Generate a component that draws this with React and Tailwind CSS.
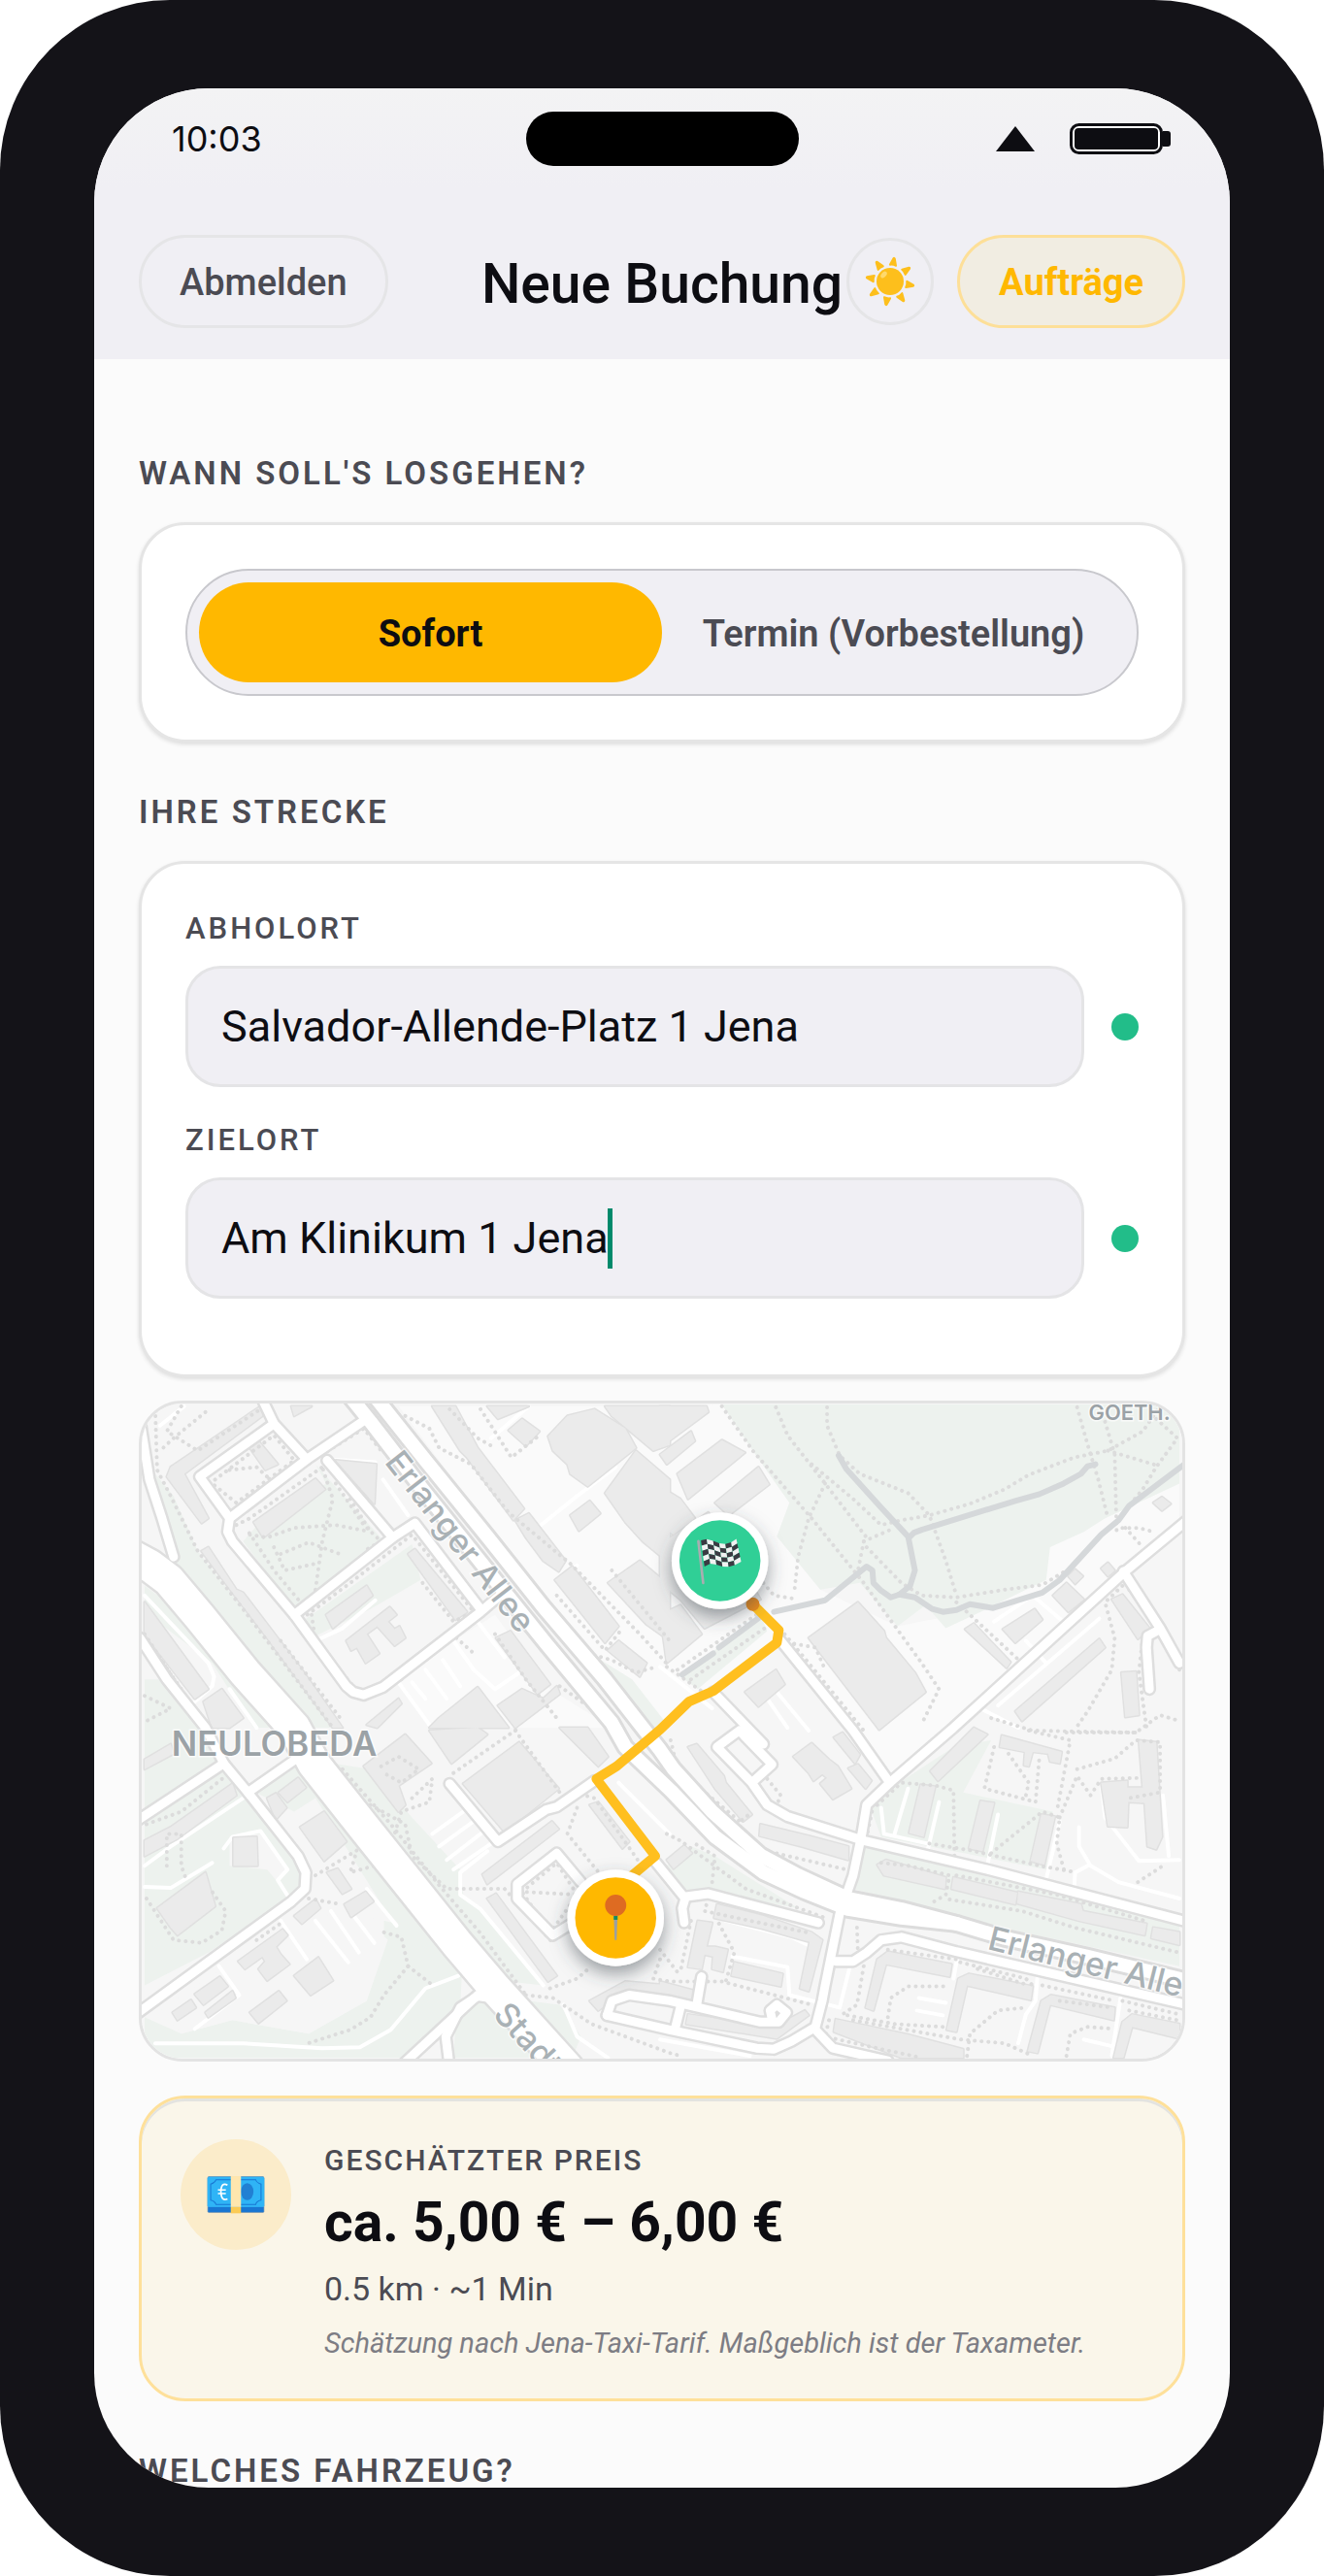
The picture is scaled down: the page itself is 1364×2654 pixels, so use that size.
import React, { useState } from "react";

// Map sheets: the drawing is split in four sheets, each with its own origin.
const ORIGINS = { a: [-13, -13], b: [537, -13], c: [-13, 337], d: [537, 337] };

// "a 10,20 30,40 b 5,5" -> list of map points, a letter switches the sheet
function toPoints(line) {
  let origin = ORIGINS.a;
  const points = [];
  line.split(" ").forEach((part) => {
    if (ORIGINS[part]) {
      origin = ORIGINS[part];
      return;
    }
    const [x, y] = part.split(",").map(Number);
    points.push(`${Math.round(x / 2.8 + origin[0])},${Math.round(y / 3 + origin[1])}`);
  });
  return points.join(" ");
}

const openGround = [
  "a 780,50 1568,50 b 180,45 270,190 375,350 340,455 465,620 690,735 900,690 1130,490 1290,400 1506,290 1506,430 1350,560 850,1050 560,1050 340,780 0,1050 a 1500,1050 1160,590",
  "a 780,910 940,780 1060,700 1220,930 1400,1050 880,1050",
  "d 680,170 850,0 560,0",
];

const greens = [
  "b 180,45 1506,45 1506,290 1290,400 1230,440 1130,490 1120,590 930,690 830,740 770,670 690,735 580,600 465,620 340,455 375,350 270,190",
  "a 75,260 130,330 200,500 330,680 400,780 620,1050 500,1050 160,600 100,460",
  "a 540,230 740,470 480,680 330,470 390,400 570,290",
  "a 500,720 820,480 845,590 700,680 530,770",
  "a 45,610 160,700 430,1050 360,1050 240,850 45,690",
  "a 1310,800 1460,900 1568,1050 1500,1050",
  "a 45,900 110,900 200,1050 45,1050",
  "c 45,0 200,0 270,110 330,200 480,400 500,480 450,540 230,700 45,800",
  "c 345,190 480,110 800,530 965,750 960,860 800,1025 45,1025 45,900 150,950 300,910 520,950 690,850 750,660 600,500 480,260",
  "c 590,110 700,130 820,280 960,440 970,520 1020,570 1200,800 1100,790 950,590 760,340",
  "c 1160,850 1250,860 1310,960 1290,1010 1200,930",
  "c 950,880 1020,850 1060,880 1180,1025 940,1025",
  "d 20,430 90,370 160,400 400,560 140,510 80,520",
  "d 590,370 1506,610 1506,740 860,590 560,500",
  "d 680,180 850,60 960,40 880,200 1140,260 1120,440 640,340 610,250",
  "b 60,890 290,700 310,750 110,930",
];

const lightBlocks = [
  "a 230,270 370,170 430,130 490,210 310,350",
  "a 540,780 850,590 930,710 770,850 680,900 640,930",
  "c 290,340 380,330 460,440 430,480 400,440 290,430",
  "c 440,600 740,560 740,680 690,850 520,950 300,910 150,950 90,880 360,680",
  "c 480,260 540,220 740,560 780,610 560,560 520,480",
];

const buildings = [
  "a 120,240 380,50 385,80 160,260 230,400 210,415 108,270",
  "a 350,180 375,160 430,230 395,250",
  "a 362,410 540,275 568,310 390,460",
  "a 600,220 718,230 710,355",
  "a 810,510 830,495 980,690 945,715",
  "a 210,500 230,490 310,620 330,630 500,870 620,1050 590,1050 400,770 300,630",
  "a 570,700 690,610 705,640 590,740",
  "a 630,780 755,675 775,700 750,720 770,745 785,735 800,770 770,795 720,735 690,760 725,820 685,850 660,800 645,810",
  "a 880,50 945,50 1010,180 1145,370 1115,405 980,210 960,190",
  "a 1120,405 1160,385 1265,530 1245,565 1200,530 1150,460",
  "a 1235,590 1285,550 1420,735 1380,785",
  "a 1280,390 1335,345 1365,385 1305,438",
  "a 1065,770 1105,750 1220,915 1185,945",
  "a 870,1050 900,1020 1010,925 1100,1050",
  "a 1070,980 1140,930 1200,960 1240,920 1250,945 1120,1050",
  "a 1390,810 1420,780 1500,850 1480,890",
  "a 1215,145 1270,80 1350,60 1440,120 1470,180 1400,240 1330,300 1280,260 1270,230 1230,190",
  "a 1100,125 1140,90 1190,130 1150,175",
  "a 1380,320 1470,190 1568,280 1568,540 1490,470 1440,410",
  "a 1390,600 1480,530 1568,610 1568,780 1500,730",
  "a 1040,50 1160,50 1070,90",
  "a 1380,50 1568,50 1568,170 1520,190 1400,80",
  "a 45,660 230,930 190,960 45,760",
  "a 215,970 270,930 330,1020 290,1050 240,1050",
  "a 470,50 530,50 480,80",
  "a 690,1040 780,960 790,975 720,1050",
  "b 0,50 135,50 140,70 0,180",
  "b 0,200 90,130 100,160 20,230",
  "b 50,260 180,155 245,195 80,340",
  "b 160,350 285,240 315,295 200,390",
  "b 0,300 60,340 100,400 40,450 0,420",
  "b 0,480 140,380 240,560 290,650 130,740 60,650 0,600",
  "b 0,700 60,670 120,760 20,850",
  "b 430,770 575,660 650,750 655,770 740,880 770,940 635,1055",
  "b 245,940 335,870 360,915 285,985",
  "b 885,745 910,725 1015,845 1005,865",
  "b 995,745 1085,680 1110,715 1030,785",
  "b 1140,640 1180,600 1230,650 1185,690",
  "b 1310,650 1340,635 1420,740 1385,775",
  "b 1030,1000 1275,775 1290,800 1050,1030",
  "b 1338,880 1380,875 1390,1010 1350,1018",
  "b 1432,350 1455,333 1480,355 1455,375",
  "b 1185,580 1203,558 1225,580 1205,602",
  "b 1280,555 1300,538 1318,560 1300,580",
  "c 45,100 120,50 130,80 45,130",
  "c 120,310 300,175 310,210 140,345 45,400 45,350",
  "c 302,342 370,340 372,430 302,430",
  "c 80,560 220,450 250,555 140,645 120,620",
  "c 495,310 565,262 630,355 565,415",
  "c 400,220 425,205 455,250 425,285",
  "c 435,200 490,155 512,185 460,230",
  "c 575,450 605,438 645,500 620,515",
  "c 480,585 540,535 555,560 500,610",
  "c 625,550 685,510 708,540 645,588",
  "c 315,725 445,628 458,645 425,680 440,705 465,735 400,785 375,750 395,725 385,710 335,750",
  "c 480,770 550,715 590,785 525,832",
  "c 350,885 435,818 455,850 375,918",
  "c 190,828 262,775 285,805 215,860",
  "c 125,885 180,845 192,870 140,908",
  "c 220,885 300,820 308,840 230,900",
  "c 870,10 1010,0 1040,20 935,110",
  "c 970,175 1130,45 1245,190 1090,325",
  "c 680,120 800,20 875,110 780,180 800,240 780,260",
  "c 1025,455 1225,290 1245,315 1040,485",
  "c 1335,240 1360,230 1450,355 1430,375",
  "c 1040,530 1065,515 1240,770 1215,790",
  "c 1250,0 1330,0 1390,90 1360,120",
  "c 1335,850 1440,790 1568,800 1568,830 1440,815 1360,880",
  "d 80,60 105,50 185,150 190,170 265,270 240,290 160,190",
  "d 290,300 430,335 545,370 545,410 410,370 288,335",
  "d 385,90 440,48 490,100 515,120 555,190 500,222 465,175 485,155 470,145 445,165 430,140",
  "d 505,30 530,15 580,85 565,110",
  "d 545,125 575,115 612,165 595,188",
  "d 910,0 950,20 805,165 783,135",
  "d 755,178 797,183 765,338 722,328",
  "d 930,228 970,235 935,385 897,375",
  "d 1105,270 1145,275 1115,425 1075,415",
  "d 990,25 1165,75 1158,110 1130,105 1125,80 1080,75 1070,120 1055,118 1058,75 985,60",
  "d 1280,170 1355,165 1355,185 1400,185 1390,40 1440,45 1455,340 1440,378 1415,370 1405,235 1358,230 1355,310 1300,305",
  "d 630,425 655,412 830,465 825,500 650,460",
  "d 850,465 1035,512 1030,548 845,500",
  "d 1038,510 1220,550 1225,570 1410,610 1405,645 1215,600 1035,545",
  "d 1430,620 1506,635 1506,675 1425,655",
  "d 20,410 70,365 92,390 40,438",
  "d 165,550 300,585 440,635 470,660 430,818 405,810 435,665 295,625 158,590",
  "d 110,600 152,605 135,680 160,682 195,690 182,760 150,750 155,710 130,705 120,750 80,745",
  "d 215,730 355,765 350,805 208,770",
  "d 80,890 330,930 420,880 432,895 340,965 75,920",
  "d 0,790 95,815 95,845 0,830",
  "d 660,695 845,735 840,775 655,735 620,880 595,870 630,720",
  "d 895,765 1080,805 1075,845 890,800 860,945 832,938 865,780",
  "d 1135,830 1320,870 1315,910 1130,860 1095,1012 1068,1005 1105,850",
  "d 1370,890 1506,920 1506,965 1370,930 1345,1025 1315,1025 1340,915",
  "d 510,905 720,955 880,1000 880,1025 700,1025 505,945",
];

const majorRoad = ["a -20,500 60,545 115,590 205,705 335,880 478,1050 c 535,110 680,310 815,490 950,670 1060,810 1270,1060"];
const carriageways = [
  "a 640,20 700,100 860,320 1060,590 1210,790 1400,1035 c 1440,60 d 30,195 160,340 300,450 420,510 545,565 700,590 860,610",
  "a 720,30 860,220 1040,455 1200,675 1380,900 1490,1050 c 1540,70 d 40,130 150,260 290,395 400,460 545,530 700,565 860,610 1000,655 1240,710 1540,790",
];
const streets = [
  "a 30,90 60,280 95,400 130,520",
  "a 385,30 420,105 515,215",
  "a 420,105 205,270 292,400",
  "a 690,90 515,215 292,400 285,440 300,470 480,700 630,920 650,940 680,948 735,925 1020,690 1075,640",
  "a 480,700 765,460 830,415 1020,680",
  "a 575,220 765,460",
  "a 30,770 110,900 220,1050 c 275,110 345,200 490,400 512,450 510,500 470,540 20,890",
  "c 20,290 275,110",
  "c 345,200 500,85",
  "c 930,175 1070,355 1210,255 1240,245 1350,165",
  "c 1310,480 1240,390 1125,485 1125,530 1230,645 1310,590",
  "c 780,1060 1010,830",
  "c 930,1060 918,960 960,870 1010,835 1050,840",
  "c 1385,895 1400,850 1450,830 1568,850 d 290,915 345,915 366,885 340,862 318,880 325,905",
  "c 1385,895 1568,940 d 280,995 330,1000 380,975 450,930 470,850 480,800 520,580 560,460 585,330 600,240 665,170 850,0 b 1350,565 1530,405",
  "b 350,780 560,1060 d 665,170",
  "b 1345,565 1450,740 1506,850",
  "b 1450,745 1415,765 1410,800 1420,930",
  "b 155,940 300,1100",
  "d 265,170 165,60 230,10 325,115 265,170 310,240 370,275 590,350 950,440 1540,605",
  "d -10,420 72,530 65,560 70,605",
  "d 75,525 140,515 460,605",
  "d 510,725 560,725 600,700 640,660 700,652 860,695 1540,865",
  "d 105,860 120,775",
  "d 60,870 45,930",
  "d 450,940 500,995 660,1035",
];
const lanes = [
  "a 90,110 160,50",
  "a 540,780 620,740 715,655",
  "a 45,640 230,850 245,890 240,920 190,970",
  "a 290,930 370,1050",
  "a 820,910 860,960",
  "a 860,870 920,960",
  "a 910,840 960,920",
  "a 940,780 1000,870 1060,930 1130,880",
  "a 780,910 870,1040",
  "a 1010,720 1090,830",
  "a 1050,150 1160,50",
  "a 1170,440 1300,330 1410,240",
  "a 580,215 715,225",
  "a 735,280 810,390",
  "a 1240,590 1300,545",
  "c 45,430 120,370 330,220",
  "c 45,495 120,498 240,420",
  "c 275,375 300,340 380,320 460,440 430,475 470,540",
  "c 440,600 515,720",
  "c 540,600 635,730",
  "c 585,570 665,700",
  "c 640,570 710,670",
  "c 690,500 775,615",
  "c 260,740 320,830 190,935",
  "c 75,982 330,980 560,997 670,993 760,940 860,810 955,770",
  "c 1040,385 960,450 960,520 1020,565 1200,800",
  "c 880,330 970,260",
  "c 900,370 1000,290",
  "c 920,410 1030,320",
  "c 940,440 1050,360",
  "c 1260,860 1300,960 1390,1025",
  "c 1420,170 1568,330",
  "b 0,860 150,990",
  "b 310,960 370,1050",
  "b 340,940 430,1060",
  "b 970,720 1080,640 1180,730",
  "b 980,980 1275,710",
  "b 930,990 1040,1050",
  "b 1060,780 1120,850",
  "d 775,385 810,230",
  "d 680,330 720,190",
  "d 950,430 980,270",
  "d 1120,470 1160,290",
  "d 1200,500 1205,450 1240,430",
  "d 1215,310 1215,370 1250,430 1330,480 1506,530",
  "d 1280,170 1290,280 1350,360 1390,415 1506,412",
  "d 1460,210 1475,400",
  "d 640,250 650,330 775,360",
  "d 190,600 380,650 440,680",
  "d 210,710 370,745 375,830 520,870 550,750",
  "d 750,840 830,855",
  "d 745,880 820,895",
  "d 865,700 850,780",
  "d 1095,770 1090,850 1060,890 1040,980",
  "d 1335,840 1310,1020",
  "d 1230,970 1310,990",
  "d 0,970 260,1020",
];
const paths = [
  "a 75,60 80,250 120,330 200,500 330,680 480,890 590,1050",
  "a 150,50 110,130 200,190 380,60",
  "a 220,70 130,150 90,190",
  "a 250,280 420,140 480,220 310,350 240,290",
  "a 290,250 370,240 400,270",
  "a 310,420 350,400 560,240",
  "a 540,620 560,470 590,340 560,240",
  "a 350,450 400,460 480,430 600,420 700,440",
  "a 420,490 450,560 540,540",
  "a 440,510 520,475 610,510",
  "a 600,290 680,420 730,470 680,500",
  "a 640,340 700,440",
  "a 560,200 680,120 730,190",
  "a 500,710 640,600 820,450 1000,690",
  "a 850,600 940,720 1000,690",
  "a 530,700 540,780 680,960 790,900",
  "a 490,650 420,560 340,430",
  "a 770,60 860,190 1090,500 1300,800 1460,1000",
  "a 800,80 870,120 900,180 990,230 1100,380 1280,540 1480,760 1568,860",
  "a 1020,60 1110,210 1190,140",
  "a 930,60 1010,150 1060,180",
  "a 1050,440 1120,560 1190,620",
  "a 1240,640 1380,810 1430,740",
  "a 1330,820 1400,840 1470,880 1530,860",
  "a 45,760 190,1000",
  "a 60,790 170,960",
  "a 45,950 120,990 50,1030",
  "a 1060,760 1150,900 1240,1020",
  "a 950,770 1000,820",
  "a 1250,920 1420,1050",
  "a 1400,560 1568,780",
  "a 440,780 620,1030",
  "b 180,50 270,190 440,400 590,600 760,850 810,930 765,1025",
  "b 335,55 370,140 480,290 600,460",
  "b 485,55 485,110 520,205 580,260 720,320 780,390 830,530 860,640",
  "b 480,290 430,400 400,520 390,630",
  "b 440,230 560,340 640,420 700,405 780,390 900,355 1000,310 1070,265 1200,210 1300,190 1400,130 1450,50",
  "b 590,470 680,430",
  "b 590,470 575,560",
  "b 600,490 700,600 760,640 860,645 1000,620 1110,605 1180,560",
  "b 1210,55 1240,170 1270,280 1300,400",
  "b 1290,100 1320,200 1325,440",
  "b 1440,90 1500,150 1440,240 1400,310 1330,400",
  "b 1300,190 1440,235",
  "b 300,600 330,640 400,650",
  "b 360,760 430,850 590,1060",
  "b 390,790 450,800 480,870",
  "b 860,660 1050,850",
  "b 1340,430 1390,430 1430,440",
  "b 1350,430 1400,490",
  "b 1340,610 1290,660 1320,770 1310,870 1240,1000 1200,1060",
  "b 1360,620 1480,780 1506,870",
  "b 1400,770 1390,880 1410,1050",
  "b 960,1020 1080,1060 1380,1065 1450,1010 1506,1030",
  "b 20,860 140,950",
  "b 50,870 290,690",
  "b 90,900 320,730",
  "c 50,300 150,260 280,150",
  "c 110,430 110,330 150,330 150,430 165,470",
  "c 50,530 130,660 210,670 270,630 280,570 240,510",
  "c 740,635 790,650 810,740 740,830 700,900 640,940 510,985",
  "c 810,740 885,805",
  "c 540,460 660,380 640,450 710,430",
  "c 520,530 600,545",
  "c 370,660 450,600",
  "c 620,130 760,300 900,490 1020,640 1150,830",
  "c 730,120 780,90 840,130 790,170 740,140",
  "c 820,220 880,160 870,230 790,260 770,330",
  "c 700,240 800,300 820,400 920,500 1090,500 1230,670",
  "c 940,140 1130,0",
  "c 1120,10 1250,200",
  "c 1080,350 1230,230",
  "c 1290,200 1350,220 1480,420",
  "c 1300,250 1270,330 1370,460",
  "c 1140,510 1240,420 1300,520 1220,640 1140,510 1300,520",
  "c 1150,830 1230,840 1340,920 1568,1010 d 60,1020",
  "c 1220,810 1300,780 1340,740",
  "c 1540,720 1520,780 1568,790 d 180,790 440,860",
  "d 30,40 50,130 240,300",
  "d 110,180 220,300 270,260",
  "d 310,160 350,210 340,240",
  "d 300,380 420,410 540,440",
  "d 150,480 160,400 100,360",
  "d 20,330 60,350 250,500 480,590",
  "d 620,240 600,340",
  "d 630,240 700,170 800,180 850,195 855,400",
  "d 780,360 900,380 1100,430 1210,450",
  "d 960,390 1110,260 1160,280 1150,360 1175,460",
  "d 970,60 940,190 1090,230 1100,90",
  "d 1010,80 1070,170 1060,210",
  "d 1070,10 1190,40 1150,260",
  "d 1180,15 1380,15 1390,0",
  "d 1160,280 1210,150 1250,210 1280,160 1400,155",
  "d 1210,130 1320,95 1380,40 1450,45 1450,200 1360,220",
  "d 1385,480 1460,430",
  "d 640,420 720,430 840,460 830,520 780,550",
  "d 840,535 1050,570 1200,620 1506,700",
  "d 860,460 1150,520 1406,600",
  "d 560,490 580,370",
  "d 570,620 575,700",
  "d 590,740 570,860 530,890 680,920 820,930",
  "d 660,900 670,840 720,805 830,805",
  "d 660,690 860,720",
  "d 870,730 1060,780 1090,810",
  "d 920,750 1070,800",
  "d 890,1020 900,950 980,880 1060,870",
  "d 1110,800 1320,850",
  "d 1160,850 1310,870",
  "d 1180,1020 1190,950 1240,930 1320,935",
  "d 1340,850 1506,890",
  "d 1360,880 1500,910",
  "d 490,910 480,960 640,1000 760,1025",
  "d 560,910 870,970 1000,980 1080,1020",
  "d 90,600 60,760",
  "d 170,610 215,700 190,790",
  "d 140,530 130,570 260,600 440,640",
  "d 0,690 60,770",
];
const trails = [
  "b 518,203 540,245 640,365 720,455 740,560 725,610 695,635 670,645 640,625 620,600 615,560 600,548 585,560 480,655 330,690",
  "b 722,460 735,444 760,435 1030,345 1100,325 1170,292 1220,262 1240,238 1262,230",
  "b 695,635 740,645 790,680 820,690 860,685 900,665 965,678 1110,630 1160,590 1280,450 1330,405 1360,360 1530,225",
  "b 65,885 155,820",
  "b 170,800 290,705",
];
const route = "b 268,665 345,748 338,785 155,935 85,970 0,1055 c 1415,120 1355,158 1525,398 1455,462";

// Edge points of the waving flag cloth, 7 along the top and 7 along the bottom
const flagTop = [[127, 138], [145, 134], [165, 139], [184, 147], [203, 149], [221, 144], [237, 133]];
const flagBottom = [[138, 219], [156, 210], [175, 213], [194, 219], [213, 220], [232, 215], [252, 204]];
const FLAG_ROWS = 5;

function flagCell(col, row) {
  const at = (c, r) => {
    const t = r / FLAG_ROWS;
    const x = flagTop[c][0] * (1 - t) + flagBottom[c][0] * t;
    const y = flagTop[c][1] * (1 - t) + flagBottom[c][1] * t;
    return `${x},${y}`;
  };
  return [at(col, row), at(col + 1, row), at(col + 1, row + 1), at(col, row + 1)].join(" ");
}

function Lines({ items, color, width, dash }) {
  return (
    <g fill="none" stroke={color} strokeWidth={width} strokeLinecap="round" strokeLinejoin="round" strokeDasharray={dash}>
      {items.map((line) => (
        <polyline key={line} points={toPoints(line)} />
      ))}
    </g>
  );
}

function Areas({ items, fill, stroke }) {
  return (
    <g fill={fill} stroke={stroke} strokeWidth="3" strokeLinejoin="round">
      {items.map((line) => (
        <polygon key={line} points={toPoints(line)} />
      ))}
    </g>
  );
}

function RouteMap() {
  return (
    <svg
      viewBox="0 0 1078 681"
      preserveAspectRatio="xMidYMid slice"
      className="block h-full w-full"
      role="img"
      aria-label="Karte mit Strecke"
    >
      <defs>
        <filter id="pin-shadow" x="-50%" y="-50%" width="200%" height="200%">
          <feDropShadow dx="0" dy="8" stdDeviation="9" floodColor="#3c4650" floodOpacity="0.5" />
        </filter>
      </defs>
      <rect width="1078" height="681" fill="#f6f6f6" />
      <Areas items={openGround} fill="#fafafa" stroke="none" />
      <Areas items={greens} fill="#edf2ee" stroke="none" />
      <Areas items={lightBlocks} fill="#f6f6f6" stroke="none" />
      <Lines items={lanes} color="#ffffff" width={4} />
      {/* outlines first, so touching buildings melt into one block */}
      <Areas items={buildings} fill="none" stroke="#e0e0e0" />
      <Areas items={buildings} fill="#ebebeb" stroke="none" />
      <Lines items={paths} color="#dcdcdc" width={4} dash="0.1 7" />
      <Lines items={trails} color="#d5d8da" width={6} />

      <Lines items={streets} color="#dedede" width={14} />
      <Lines items={carriageways} color="#dcdcdc" width={20} />
      <Lines items={majorRoad} color="#dedede" width={38} />
      <Lines items={streets} color="#ffffff" width={9} />
      <Lines items={carriageways} color="#ffffff" width={14} />
      <Lines items={majorRoad} color="#ffffff" width={33} />

      <g
        fontFamily="Inter, sans-serif"
        fontWeight="600"
        fill="#a9b1b5"
        stroke="#ffffff"
        strokeWidth="3"
        strokeOpacity="0.7"
        paintOrder="stroke"
      >
        <text fontSize="34" fontWeight="500" transform="translate(251 62) rotate(52)">Erlanger Allee</text>
        <text fontSize="34" fontWeight="500" transform="translate(875 566) rotate(14)">Erlanger Allee</text>
        <text fontSize="34" fontWeight="500" transform="translate(363 635) rotate(48)">Stadt</text>
        <text fontSize="35" x="31" y="366" fill="#9ba2a6">NEULOBEDA</text>
        <text fontSize="22" x="981" y="18" fill="#9ba2a6">GOETH.</text>
      </g>

      <Lines items={[route]} color="#ffbf1f" width={10} />
      <circle cx="633" cy="209" r="7" fill="#e98a1c" />

      {/* Destination pin */}
      <circle cx="599" cy="164" r="50" fill="#ffffff" filter="url(#pin-shadow)" />
      <circle cx="599" cy="164" r="42" fill="#30cf96" />
      <g transform="translate(537 97) scale(0.3333)">
        <path d="M119 140 L134 270" stroke="#a9adb0" strokeWidth="8" strokeLinecap="round" />
        {Array.from({ length: 6 * FLAG_ROWS }, (_, i) => {
          const col = i % 6;
          const row = Math.floor(i / 6);
          return <polygon key={i} points={flagCell(col, row)} fill={(col + row) % 2 ? "#f1f1f1" : "#3b3a42"} />;
        })}
      </g>

      {/* Pickup pin */}
      <circle cx="491" cy="534" r="50" fill="#ffffff" filter="url(#pin-shadow)" />
      <circle cx="491" cy="534" r="42" fill="#ffb800" />
      <path d="M489 530 H493 L492 557 H490 Z" fill="#9aa0a3" />
      <rect x="489" y="532" width="4" height="4" fill="#178a5f" />
      <circle cx="491" cy="521" r="11" fill="#de6b22" />
    </svg>
  );
}

function SunIcon() {
  return (
    <svg viewBox="0 0 120 120" className="h-[60px] w-[60px]" aria-hidden="true">
      <g fill="#fdbf1c">
        {[10, 55, 100, 145, 190, 235, 280, 325].map((angle) => (
          <path
            key={angle}
            d="M60 9 Q62 9 63 11 L68 25 Q69 28 66 28 Q60 26 54 28 Q51 28 52 25 L57 11 Q58 9 60 9 Z"
            transform={`rotate(${angle} 60 60)`}
          />
        ))}
        <circle cx="60" cy="60" r="28" />
      </g>
      <ellipse cx="47" cy="46" rx="8" ry="5" fill="#ffd96b" transform="rotate(-50 47 46)" />
    </svg>
  );
}

function EuroNoteIcon() {
  return (
    <svg viewBox="98 143 177 118" className="h-10 w-[60px]" aria-hidden="true">
      <rect x="100" y="146" width="173" height="112" rx="5" fill="#7f9fb8" />
      <rect x="100" y="148" width="173" height="92" rx="5" fill="#2fb4f6" />
      <rect x="102" y="240" width="169" height="15" fill="#1976d2" />
      <path
        d="M126 157 H247 Q249 166 263 170 V219 Q249 222 247 232 H126 Q123 222 110 219 V170 Q123 166 126 157 Z"
        fill="none"
        stroke="#1976d2"
        strokeWidth="3"
      />
      <ellipse cx="221" cy="193" rx="19" ry="26" fill="#2180d3" />
      <path d="M161 173 Q142 163 141 193 Q142 224 161 215 M132 188 H156 M132 199 H156" fill="none" stroke="#ffffff" strokeWidth="5" />
      <rect x="171" y="146" width="31" height="94" fill="#ffe6ae" />
      <rect x="171" y="240" width="31" height="19" fill="#fbcb55" />
    </svg>
  );
}

function StatusBar() {
  return (
    <div className="grid h-[103px] grid-cols-[1fr_auto_1fr] items-center bg-linear-to-b from-[#f3f3f4] to-[#f0eff4]">
      <span className="pl-20 font-[Inter] text-[36px] leading-none text-[#0d0d12]">10:03</span>
      <div className="h-14 w-[281px] rounded-full bg-black" />
      <div className="flex items-center justify-end gap-9 pr-[61px]">
        <svg viewBox="0 0 40 26" className="h-[26px] w-10" aria-hidden="true">
          <path d="M20 0 L40 26 H0 Z" fill="#0d0d12" />
        </svg>
        <svg viewBox="0 0 104 32" className="h-8 w-[104px]" aria-hidden="true">
          <rect x="1.5" y="1.5" width="93" height="29" rx="8" fill="#ffffff" stroke="#0d0d12" strokeWidth="3" />
          <rect x="5" y="5" width="86" height="22" rx="4" fill="#0d0d12" />
          <path d="M96 8 H101 Q104 8 104 11 V21 Q104 24 101 24 H96 Z" fill="#0d0d12" />
        </svg>
      </div>
    </div>
  );
}

function SectionTitle({ children }) {
  return (
    <h2 className="mt-[50px] mb-7 text-[33px] leading-[44px] font-semibold tracking-[3px] text-[#4b4b53]">
      {children}
    </h2>
  );
}

function AddressField({ id, label, value, onChange, active }) {
  return (
    <div className="mb-[33px]">
      <label htmlFor={id} className="mb-4 block text-[31px] leading-[44px] font-medium tracking-[3px] text-[#4b4b53]">
        {label}
      </label>
      <div className="flex items-center gap-7">
        <div className="relative flex-1">
          <input
            id={id}
            type="text"
            value={value}
            onChange={onChange}
            className="h-[125px] w-full rounded-[36px] border-[3px] border-[#e4e4e6] bg-[#f0eff4] px-[34px] text-[45px] text-[#0d0d12] outline-none"
          />
          {active && <span className="absolute top-8 left-[435px] h-[62px] w-[5px] bg-[#00896b]" />}
        </div>
        <span className="h-7 w-7 rounded-full bg-[#22bd89]" />
      </div>
    </div>
  );
}

function App() {
  const [mode, setMode] = useState("now");
  const [pickup, setPickup] = useState("Salvador-Allende-Platz 1 Jena");
  const [target, setTarget] = useState("Am Klinikum 1 Jena");

  const tab = "h-[103px] rounded-full pt-[3px] text-[38px] ";
  const tabOn = "bg-[#ffb800] font-bold text-[#0d0d12]";
  const tabOff = "font-semibold text-[#4b4b53]";

  return (
    <div className="h-screen bg-white">
      <div className="h-full rounded-[175px] bg-[#141318] px-[97px] py-[91px]">
        <div className="flex h-full flex-col overflow-hidden rounded-[118px] bg-[#fbfbfb] font-[Roboto,sans-serif]">
          <StatusBar />

          {/* Header */}
          <header className="grid grid-cols-[1fr_auto_1fr] items-center bg-[#f0eff4] px-[46px] pt-12 pb-8">
            <button className="h-24 justify-self-start rounded-full border-[3px] border-[#e5e5e7] px-[39px] pt-[3px] text-[38px] font-medium text-[#4b4b53]">
              Abmelden
            </button>
            <h1 className="pt-[5px] text-[57px] leading-[72px] font-medium text-[#0d0d12]">Neue Buchung</h1>
            <div className="flex items-center gap-6 justify-self-end">
              <button
                aria-label="Helles Design"
                className="flex h-[90px] w-[90px] items-center justify-center rounded-full border-[3px] border-[#e5e5e7]"
              >
                <SunIcon />
              </button>
              <button className="h-24 rounded-full border-[3px] border-[#fddf98] bg-[#f1ede2] px-10 pt-[3px] text-[38px] font-bold text-[#ffb800]">
                Aufträge
              </button>
            </div>
          </header>

          <main className="min-h-0 flex-1 overflow-hidden px-[46px] pt-[46px]">
            {/* Time */}
            <SectionTitle>WANN SOLL'S LOSGEHEN?</SectionTitle>
            <section className="rounded-[48px] border-[3px] border-[#e5e5e5] bg-white p-[45px] shadow-[0_2px_4px_rgba(0,0,0,0.12)]">
              <div className="grid grid-cols-2 rounded-full border-2 border-[#c8c8cd] bg-[#f0eff4] p-3">
                <button
                  onClick={() => setMode("now")}
                  aria-pressed={mode === "now"}
                  className={tab + (mode === "now" ? tabOn : tabOff)}
                >
                  Sofort
                </button>
                <button
                  onClick={() => setMode("later")}
                  aria-pressed={mode === "later"}
                  className={tab + (mode === "later" ? tabOn : tabOff)}
                >
                  Termin (Vorbestellung)
                </button>
              </div>
            </section>

            {/* Route */}
            <SectionTitle>IHRE STRECKE</SectionTitle>
            <section className="rounded-[48px] border-[3px] border-[#e5e5e5] bg-white p-[45px] shadow-[0_2px_4px_rgba(0,0,0,0.12)]">
              <AddressField id="pickup" label="ABHOLORT" value={pickup} onChange={(e) => setPickup(e.target.value)} />
              <AddressField id="target" label="ZIELORT" value={target} onChange={(e) => setTarget(e.target.value)} active />
            </section>

            <div className="mt-6 h-[681px] overflow-hidden rounded-[45px] border-[3px] border-[#e3e3e3]">
              <RouteMap />
            </div>

            {/* Price */}
            <section className="mt-[35px] flex items-start gap-[34px] rounded-[48px] border-[3px] border-[#fee09a] bg-[#faf6ea] px-10 pt-[42px] pb-[35px] shadow-[inset_0_3px_0_#e3e3e0]">
              <div className="flex h-[114px] w-[114px] shrink-0 items-center justify-center rounded-full bg-[#fbecca]">
                <EuroNoteIcon />
              </div>
              <div>
                <p className="text-[30px] leading-[44px] font-medium tracking-[2px] text-[#4b4b53]">GESCHÄTZTER PREIS</p>
                <p className="text-[57px] leading-[84px] font-bold text-[#0d0d12]">ca. 5,00 € – 6,00 €</p>
                <p className="text-[34px] leading-[52px] text-[#4b4b53]">0.5 km · ~1 Min</p>
                <p className="pt-2 text-[29px] leading-[44px] text-[#7d7d84] italic">
                  Schätzung nach Jena-Taxi-Tarif. Maßgeblich ist der Taxameter.
                </p>
              </div>
            </section>

            <SectionTitle>WELCHES FAHRZEUG?</SectionTitle>
          </main>
        </div>
      </div>
    </div>
  );
}

export default App;
